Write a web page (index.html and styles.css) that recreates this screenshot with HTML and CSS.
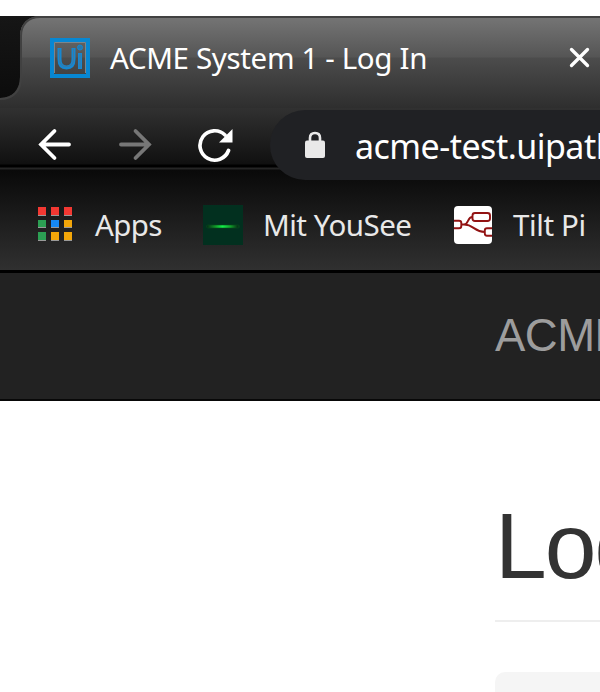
FILE: index.html
```html
<!DOCTYPE html>
<html lang="en">
<head>
<meta charset="utf-8">
<title>ACME System 1 - Log In</title>
<link rel="stylesheet" href="styles.css">
</head>
<body>
<header class="browser">
  <div class="tabs">
    <svg class="edge" width="50" height="92" viewBox="0 0 50 92">
      <defs><linearGradient id="dark" x2="0" y2="1"><stop stop-color="#161616"/><stop offset="1" stop-color="#0c0c0c"/></linearGradient></defs>
      <path d="M0 0H40C28 0 20 8 20 20V61C20 74 12 82 0 82Z" fill="url(#dark)"/>
      <path d="M50 1H40C28 1 21 9 21 20V61C21 75 13 83 0 83" fill="none" stroke="#414141" stroke-width="2"/>
    </svg>
    <svg class="favicon" width="40" height="40" viewBox="0 0 40 40" fill="none">
      <path d="M2 2H38V38H2Z" stroke="#0787d2" stroke-width="4"/>
      <path d="M4.500 35V4.500H35.500V35" stroke="#7c858b"/>
      <path d="M9.500 10V21Q9.500 29.500 16.500 29.500T23.500 21V10M30 15V31" stroke="#1687d0" stroke-width="4"/>
      <path d="M9.500 11V21Q9.500 28.500 16.500 28.500T23.500 21V11M30 16V30" stroke="#3e79a0"/>
      <circle cx="30" cy="9.500" r="2.500" fill="#2879ad" stroke="#1687d0"/>
    </svg>
    <span class="tab-title">ACME System 1 - Log In</span>
    <svg class="close" width="22" height="22" viewBox="0 0 22 22"><path d="M2.500 2.500 18.500 18.500M18.500 2.500 2.500 18.500" stroke="#fff" stroke-width="3.300" stroke-linecap="round"/></svg>
  </div>
  <div class="toolbar">
    <svg class="back" width="34" height="34" viewBox="0 0 34 34"><path d="M31 17.500H3M16.500 4 3 17.500 16.500 31" class="arrow"/></svg>
    <svg class="forward" width="34" height="34" viewBox="0 0 34 34"><path d="M3 17.500H31M17.500 4 31 17.500 17.500 31" class="arrow"/></svg>
    <svg class="reload" width="36" height="36" viewBox="0 0 36 36"><path d="M30.500 23.500A14.700 14.700 0 1 1 27 8" fill="none" stroke="#fff" stroke-width="3.700" stroke-linecap="round"/><path d="M34.500 2V15.500H21Z" fill="#fff"/></svg>
    <div class="address">
      <svg width="20" height="28" viewBox="0 0 20 28"><path d="M5 11V7Q5 2 10 2T15 7V11" fill="none" stroke="#e9e9e9" stroke-width="2.600"/><rect y="9.500" width="20" height="17.500" rx="2" fill="#e9e9e9"/></svg>
      <span>acme-test.uipath.com</span>
    </div>
  </div>
  <nav class="bookmarks">
    <div class="grid"><i class="r"></i><i class="r"></i><i class="r"></i><i class="g"></i><i class="b"></i><i class="y"></i><i class="g"></i><i class="y"></i><i class="y"></i></div>
    <span class="apps">Apps</span>
    <svg class="yousee" width="40" height="40" viewBox="0 0 40 40"><defs><linearGradient id="glow"><stop stop-color="#052e14"/><stop offset=".3" stop-color="#12a32b"/><stop offset=".5" stop-color="#14f04a"/><stop offset=".75" stop-color="#12a32b"/><stop offset="1" stop-color="#052e14"/></linearGradient></defs><path d="M0 0H40V40H0Z" fill="#02301f"/><rect x="3" y="19.500" width="34" height="4" rx="2" fill="#04401c"/><rect x="4" y="20.300" width="31" height="2.400" rx="1" fill="url(#glow)"/></svg>
    <span class="mit">Mit YouSee</span>
    <svg class="tilt" width="38" height="38" viewBox="0 0 38 38"><rect width="38" height="38" rx="4" fill="#fff"/><g fill="none" stroke="#921313" stroke-width="1.900"><rect x="18.500" y="7" width="17.500" height="8" rx="2.500"/><path d="M0 14.800H5Q7.300 14.800 7.300 17V20Q7.300 22.300 5 22.300H0M38 22.300H33Q30.800 22.300 30.800 24.500V27.500Q30.800 29.700 33 29.700H38M7.300 18.500H10C15 18.500 13 11 18.500 11M10 18.500C20 18.500 20 26 30.800 26"/></g></svg>
    <span class="pi">Tilt Pi</span>
  </nav>
</header>
<div class="navbar"><span>ACME System 1</span></div>
<main>
  <h1>Log In</h1>
  <div class="panel"></div>
</main>
</body>
</html>
```
FILE: styles.css
```css
* { box-sizing: border-box; }
body { margin: 0; padding-top: 16px; height: 692px; overflow: hidden; background: #fff; font-family: "Noto Sans", sans-serif; }
svg { display: block; flex: none; }
span, h1 { white-space: nowrap; }

.browser { height: 257px; border-bottom: 3px solid #000; color: #fff; }

.tabs { display: flex; align-items: flex-start; height: 92px; background: linear-gradient(#414141 2px, #747474 2px, #555 41px, #4c4c4c 42px, #2e2e2e); }
.favicon { margin-top: 22px; }
.tab-title { flex: none; width: 459px; margin-left: 20px; padding-top: 22px; font-size: 29.500px; line-height: 40px; letter-spacing: -.35px; }
.close { margin-top: 31px; }

.toolbar { display: flex; height: 62px; padding-left: 38px; background: linear-gradient(#313131, #101010 56px, #000 57px, #000 59px, #252525 60px, #252525 61px, #090909 62px); }
.back, .forward, .reload { margin-top: 19px; }
.arrow { fill: none; stroke: #fff; stroke-width: 3.800; stroke-linecap: round; }
.forward { margin-left: 46px; }
.forward .arrow { stroke: #777; }
.reload { margin-left: 46px; }
.address { position: relative; display: flex; align-items: center; flex: none; height: 70px; width: 330px; overflow: hidden; margin: 2px 0 0 36px; padding-left: 35px; border-radius: 35px 0 0 35px; background: #202124; font-size: 34px; }
.address span { margin-left: 30px; padding-top: 2px; letter-spacing: -.52px; }

.bookmarks { display: flex; align-items: flex-start; height: 100px; padding-left: 38px; background: linear-gradient(#090909, #303030); color: #e8e8e8; font-size: 29.500px; line-height: 40px; }
.bookmarks span { flex: none; margin-top: 35px; }
.grid { display: grid; grid-template-columns: repeat(3, 8px); gap: 4px 5px; flex: none; margin-top: 37px; }
.grid i { height: 8.500px; border-bottom: 1px solid #999; }
.r { background: #f33832; }
.g { background: #2c9f53; }
.b { background: #1689f4; }
.y { background: #f3a609; }
.apps { width: 88px; margin-left: 23px; letter-spacing: -.6px; }
.yousee { margin: 35px 0 0 20px; }
.mit { width: 171px; margin-left: 20px; letter-spacing: -.5px; }
.tilt { margin: 36px 0 0 20px; }
.pi { margin-left: 21px; letter-spacing: -.4px; }

.navbar { height: 128px; padding: 38px 0 0 495px; overflow: hidden; background: #222; border-bottom: 2px solid #080808; color: #9d9d9d; font: 45.500px/50px "Liberation Sans", Arial, sans-serif; letter-spacing: -.5px; }

main { padding: 85px 0 0 495px; overflow: hidden; }
h1 { margin: 0; height: 136px; border-bottom: 2px solid #eee; color: #333; font: 400 93px/120px "Liberation Sans", Arial, sans-serif; letter-spacing: -2px; }
.panel { height: 50px; margin-top: 50px; border-radius: 10px 0 0; background: #f5f5f5; }
```
